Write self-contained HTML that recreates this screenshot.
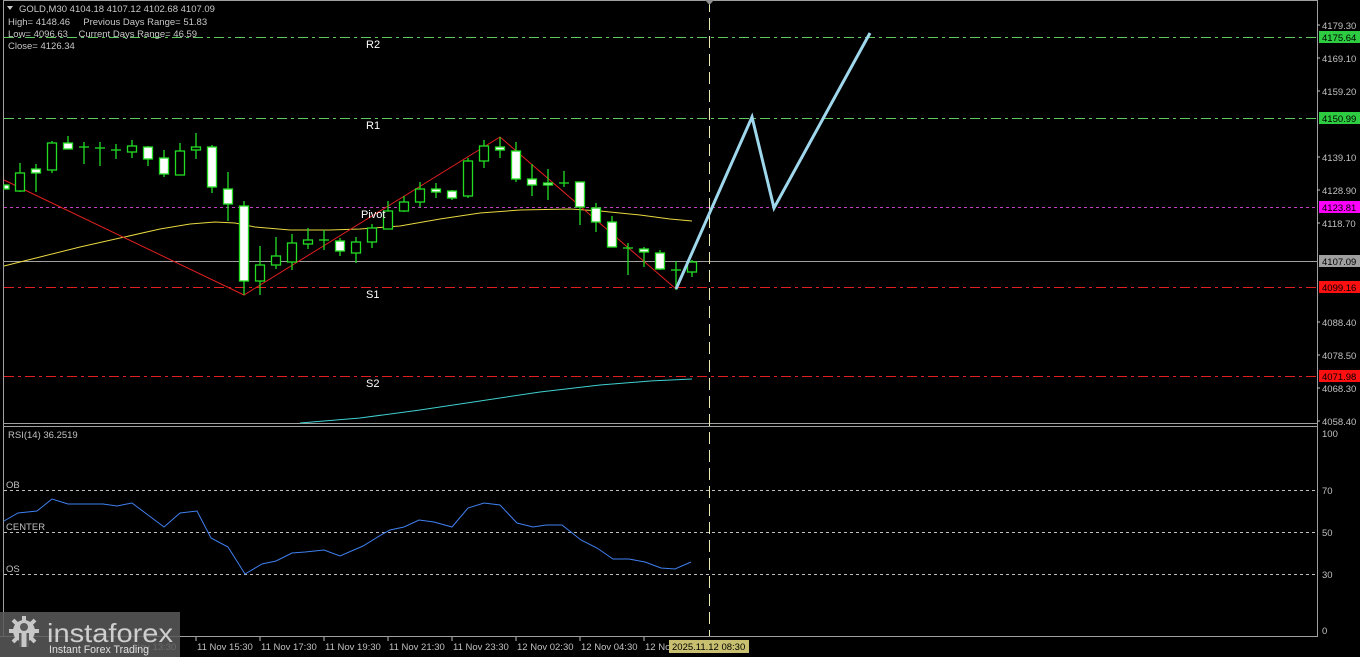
<!DOCTYPE html>
<html><head><meta charset="utf-8"><style>
html,body{margin:0;padding:0;background:#000;width:1360px;height:657px;overflow:hidden}
svg{display:block}
text{font-family:"Liberation Sans",sans-serif}
</style></head><body>
<svg width="1360" height="657" viewBox="0 0 1360 657" xmlns="http://www.w3.org/2000/svg">
<rect width="1360" height="657" fill="#000"/>
<g stroke="#a0a0a0" stroke-width="1" fill="none">
<line x1="3.5" y1="0" x2="3.5" y2="637"/>
<line x1="3" y1="0.5" x2="1317" y2="0.5"/>
<line x1="1317.5" y1="0" x2="1317.5" y2="637"/>
<line x1="3" y1="423.5" x2="1317" y2="423.5"/>
<line x1="3" y1="426.5" x2="1317" y2="426.5"/>
<line x1="0" y1="636.5" x2="1318" y2="636.5"/>
</g>
<g stroke-width="1" fill="none">
<line x1="4" y1="37.5" x2="1317" y2="37.5" stroke="#5fc85f" stroke-dasharray="10,4,3,4"/>
<line x1="4" y1="118.5" x2="1317" y2="118.5" stroke="#5fc85f" stroke-dasharray="10,4,3,4"/>
<line x1="4" y1="207.5" x2="1317" y2="207.5" stroke="#c040c0" stroke-dasharray="3,3"/>
<line x1="4" y1="261.5" x2="1317" y2="261.5" stroke="#a0a0a0"/>
<line x1="4" y1="287.5" x2="1317" y2="287.5" stroke="#e02020" stroke-dasharray="10,4,3,4"/>
<line x1="4" y1="376.5" x2="1317" y2="376.5" stroke="#e02020" stroke-dasharray="10,4,3,4"/>
<line x1="709.5" y1="0" x2="709.5" y2="636" stroke="#e8e8b0" stroke-dasharray="12,6"/>
</g>
<polygon points="705,0 714,0 709.5,5" fill="#909090"/>
<polyline fill="none" stroke="#e8d840" stroke-width="1" points="4,266 40,257 80,247 120,238 160,229 190,224 215,222 235,223 255,227 290,230 330,230 360,229 400,226 440,219 480,213 520,210 570,209 600,211 640,215 670,219 692,221"/>
<polyline fill="none" stroke="#40d0d0" stroke-width="1" points="300,423 360,418 420,410 480,401 540,392 600,385 650,381 692,379"/>
<polyline fill="none" stroke="#e02020" stroke-width="1" points="4,180 244,295 500,137 676,289"/>
<g stroke="#22dd22" stroke-width="1.3">
<line x1="20" y1="163" x2="20" y2="192"/><rect x="15.5" y="173" width="9" height="18" fill="#000"/>
<line x1="36" y1="164" x2="36" y2="192"/><rect x="31.5" y="169" width="9" height="4" fill="#fff"/>
<line x1="52" y1="141" x2="52" y2="173"/><rect x="47.5" y="143" width="9" height="27" fill="#000"/>
<line x1="68" y1="136" x2="68" y2="149"/><rect x="63.5" y="143" width="9" height="6" fill="#fff"/>
<line x1="84" y1="142" x2="84" y2="164"/><line x1="79" y1="147" x2="89" y2="147"/>
<line x1="100" y1="142" x2="100" y2="166"/><line x1="95" y1="148" x2="105" y2="148"/>
<line x1="116" y1="144" x2="116" y2="159"/><line x1="111" y1="150" x2="121" y2="150"/>
<line x1="132" y1="140" x2="132" y2="158"/><rect x="127.5" y="146" width="9" height="6" fill="#000"/>
<line x1="148" y1="146" x2="148" y2="166"/><rect x="143.5" y="147" width="9" height="12" fill="#fff"/>
<line x1="164" y1="150" x2="164" y2="177"/><rect x="159.5" y="158" width="9" height="16" fill="#fff"/>
<line x1="180" y1="143" x2="180" y2="175"/><rect x="175.5" y="151" width="9" height="24" fill="#000"/>
<line x1="196" y1="133" x2="196" y2="159"/><rect x="191.5" y="147" width="9" height="3" fill="#000"/>
<line x1="212" y1="145" x2="212" y2="193"/><rect x="207.5" y="147" width="9" height="40" fill="#fff"/>
<line x1="228" y1="172" x2="228" y2="221"/><rect x="223.5" y="189" width="9" height="15" fill="#fff"/>
<line x1="244" y1="201" x2="244" y2="295"/><rect x="239.5" y="206" width="9" height="75" fill="#fff"/>
<line x1="260" y1="246" x2="260" y2="295"/><rect x="255.5" y="265" width="9" height="16" fill="#000"/>
<line x1="276" y1="237" x2="276" y2="269"/><rect x="271.5" y="256" width="9" height="9" fill="#000"/>
<line x1="292" y1="234" x2="292" y2="270"/><rect x="287.5" y="243" width="9" height="19" fill="#000"/>
<line x1="308" y1="228" x2="308" y2="249"/><rect x="303.5" y="240" width="9" height="4" fill="#000"/>
<line x1="324" y1="230" x2="324" y2="250"/><line x1="319" y1="240" x2="329" y2="240"/>
<line x1="340" y1="238" x2="340" y2="256"/><rect x="335.5" y="241" width="9" height="10" fill="#fff"/>
<line x1="356" y1="237" x2="356" y2="263"/><rect x="351.5" y="242" width="9" height="11" fill="#000"/>
<line x1="372" y1="224" x2="372" y2="248"/><rect x="367.5" y="228" width="9" height="14" fill="#000"/>
<line x1="388" y1="201" x2="388" y2="229"/><rect x="383.5" y="211" width="9" height="18" fill="#000"/>
<line x1="404" y1="196" x2="404" y2="212"/><rect x="399.5" y="202" width="9" height="9" fill="#000"/>
<line x1="420" y1="182" x2="420" y2="207"/><rect x="415.5" y="189" width="9" height="13" fill="#000"/>
<line x1="436" y1="183" x2="436" y2="198"/><rect x="431.5" y="189" width="9" height="3" fill="#fff"/>
<line x1="452" y1="190" x2="452" y2="200"/><rect x="447.5" y="191" width="9" height="7" fill="#fff"/>
<line x1="468" y1="158" x2="468" y2="198"/><rect x="463.5" y="161" width="9" height="35" fill="#000"/>
<line x1="484" y1="140" x2="484" y2="168"/><rect x="479.5" y="146" width="9" height="15" fill="#000"/>
<line x1="500" y1="137" x2="500" y2="158"/><rect x="495.5" y="147" width="9" height="3" fill="#fff"/>
<line x1="516" y1="142" x2="516" y2="182"/><rect x="511.5" y="151" width="9" height="28" fill="#fff"/>
<line x1="532" y1="164" x2="532" y2="196"/><rect x="527.5" y="179" width="9" height="6" fill="#fff"/>
<line x1="548" y1="169" x2="548" y2="200"/><rect x="543.5" y="183" width="9" height="2" fill="#fff"/>
<line x1="564" y1="171" x2="564" y2="187"/><line x1="559" y1="183" x2="569" y2="183"/>
<line x1="580" y1="182" x2="580" y2="225"/><rect x="575.5" y="182" width="9" height="25" fill="#fff"/>
<line x1="596" y1="203" x2="596" y2="232"/><rect x="591.5" y="208" width="9" height="14" fill="#fff"/>
<line x1="612" y1="216" x2="612" y2="247"/><rect x="607.5" y="222" width="9" height="25" fill="#fff"/>
<line x1="628" y1="243" x2="628" y2="275"/><line x1="623" y1="248" x2="633" y2="248"/>
<line x1="644" y1="247" x2="644" y2="267"/><rect x="639.5" y="249" width="9" height="3" fill="#fff"/>
<line x1="660" y1="250" x2="660" y2="270"/><rect x="655.5" y="253" width="9" height="16" fill="#fff"/>
<line x1="676" y1="261" x2="676" y2="290"/><line x1="671" y1="270" x2="681" y2="270"/>
<line x1="692" y1="260" x2="692" y2="277"/><rect x="687.5" y="262" width="9" height="10" fill="#000"/>
<rect x="4" y="185" width="5" height="4" fill="#fff"/>
</g>
<polyline fill="none" stroke="#9fd8ec" stroke-width="3" points="676,289 752,117 774,208 870,33"/>
<g fill="#fff" font-size="11">
<text x="366" y="48">R2</text>
<text x="366" y="129">R1</text>
<text x="361" y="218">Pivot</text>
<text x="366" y="298">S1</text>
<text x="366" y="387">S2</text>
</g>
<g fill="#c8c8c8" font-size="9.5">
<polygon points="7,6 13,6 10,10" fill="#c8c8c8"/>
<text x="19" y="12">GOLD,M30  4104.18 4107.12 4102.68 4107.09</text>
<text x="8" y="25" xml:space="preserve">High= 4148.46     Previous Days Range= 51.83</text>
<text x="8" y="37" xml:space="preserve">Low= 4096.63    Current Days Range= 46.59</text>
<text x="8" y="49">Close= 4126.34</text>
</g>
<g fill="#c0c0c0" font-size="9.5">
<text x="1322" y="29">4179.30</text>
<text x="1322" y="62">4169.10</text>
<text x="1322" y="95">4159.20</text>
<text x="1322" y="161">4139.10</text>
<text x="1322" y="194">4128.90</text>
<text x="1322" y="227">4118.70</text>
<text x="1322" y="326">4088.40</text>
<text x="1322" y="359">4078.50</text>
<text x="1322" y="392">4068.30</text>
<text x="1322" y="425">4058.40</text>
<text x="1322" y="437">100</text>
<text x="1322" y="494">70</text>
<text x="1322" y="536">50</text>
<text x="1322" y="578">30</text>
<text x="1322" y="634">0</text>
</g>
<g stroke="#c0c0c0"><line x1="1317" y1="25" x2="1320" y2="25"/><line x1="1317" y1="58" x2="1320" y2="58"/><line x1="1317" y1="91" x2="1320" y2="91"/><line x1="1317" y1="157" x2="1320" y2="157"/><line x1="1317" y1="190" x2="1320" y2="190"/><line x1="1317" y1="223" x2="1320" y2="223"/><line x1="1317" y1="322" x2="1320" y2="322"/><line x1="1317" y1="355" x2="1320" y2="355"/><line x1="1317" y1="388" x2="1320" y2="388"/><line x1="1317" y1="421" x2="1320" y2="421"/></g>
<g font-size="9.5">
<rect x="1319" y="31" width="41" height="12" fill="#2ecc40"/><text x="1322" y="41" fill="#000">4175.64</text>
<rect x="1319" y="112" width="41" height="12" fill="#2ecc40"/><text x="1322" y="122" fill="#000">4150.99</text>
<rect x="1319" y="201" width="41" height="12" fill="#ff00ff"/><text x="1322" y="211" fill="#000">4123.81</text>
<rect x="1319" y="255" width="41" height="12" fill="#a0a0a0"/><text x="1322" y="265" fill="#000">4107.09</text>
<rect x="1319" y="281" width="41" height="12" fill="#ff1010"/><text x="1322" y="291" fill="#000">4099.16</text>
<rect x="1319" y="370" width="41" height="12" fill="#ff1010"/><text x="1322" y="380" fill="#000">4071.98</text>
</g>
<g stroke="#c0c0c0" stroke-dasharray="3,3" stroke-width="1">
<line x1="4" y1="490.5" x2="1317" y2="490.5"/>
<line x1="4" y1="532.5" x2="1317" y2="532.5"/>
<line x1="4" y1="574.5" x2="1317" y2="574.5"/>
</g>
<g fill="#c0c0c0" font-size="9.5">
<text x="8" y="438">RSI(14) 36.2519</text>
<text x="6" y="488">OB</text>
<text x="6" y="530">CENTER</text>
<text x="6" y="572">OS</text>
</g>
<polyline fill="none" stroke="#4080f0" stroke-width="1" points="4,521 18,513 37,511 52,499 68,504 103,504 117,506 132,503 164,527 180,513 197,511 211,538 228,547 245,574 262,564 276,561 292,553 305,552 324,550 340,556 363,546 381,535 390,530 404,527 419,520 434,522 452,527 468,508 484,503 500,505 517,523 533,527 546,525 562,525 581,540 597,548 613,559 629,559 645,562 661,568 675,569 691,562"/>
<g fill="#c0c0c0" font-size="9.5">
<text x="133" y="650">Nov 13:30</text>
<text x="197" y="650">11 Nov 15:30</text>
<text x="261" y="650">11 Nov 17:30</text>
<text x="325" y="650">11 Nov 19:30</text>
<text x="389" y="650">11 Nov 21:30</text>
<text x="453" y="650">11 Nov 23:30</text>
<text x="517" y="650">12 Nov 02:30</text>
<text x="581" y="650">12 Nov 04:30</text>
<text x="645" y="650">12 No</text>
</g>
<g stroke="#c0c0c0"><line x1="196" y1="637" x2="196" y2="641"/><line x1="260" y1="637" x2="260" y2="641"/><line x1="324" y1="637" x2="324" y2="641"/><line x1="388" y1="637" x2="388" y2="641"/><line x1="452" y1="637" x2="452" y2="641"/><line x1="516" y1="637" x2="516" y2="641"/><line x1="580" y1="637" x2="580" y2="641"/><line x1="644" y1="637" x2="644" y2="641"/></g>
<rect x="669" y="640" width="80" height="13" fill="#c8c070"/>
<text x="672" y="650" font-size="9.5" fill="#000">2025.11.12 08:30</text>
<rect x="0" y="612" width="180" height="45" fill="#5a5a5a" fill-opacity="0.85"/>
<g fill="#c8c8c8">
<circle cx="24" cy="631" r="11"/>
<g stroke="#c8c8c8" stroke-width="4"><line x1="24" y1="616" x2="24" y2="646"/><line x1="9" y1="631" x2="39" y2="631"/><line x1="13" y1="620" x2="35" y2="642"/><line x1="35" y1="620" x2="13" y2="642"/></g>
<circle cx="24" cy="627" r="4" fill="#5a5a5a"/>
<rect x="19" y="633" width="10" height="14" fill="#5a5a5a"/>
<rect x="21.5" y="633" width="5" height="14" fill="#c8c8c8"/>
<text x="47" y="642" font-size="26" fill="#cfcfcf" textLength="126" lengthAdjust="spacingAndGlyphs">instaforex</text>
<text x="49" y="653" font-size="11" fill="#e0e0e0" textLength="100" lengthAdjust="spacingAndGlyphs">Instant Forex Trading</text>
</g>
</svg>
</body></html>
